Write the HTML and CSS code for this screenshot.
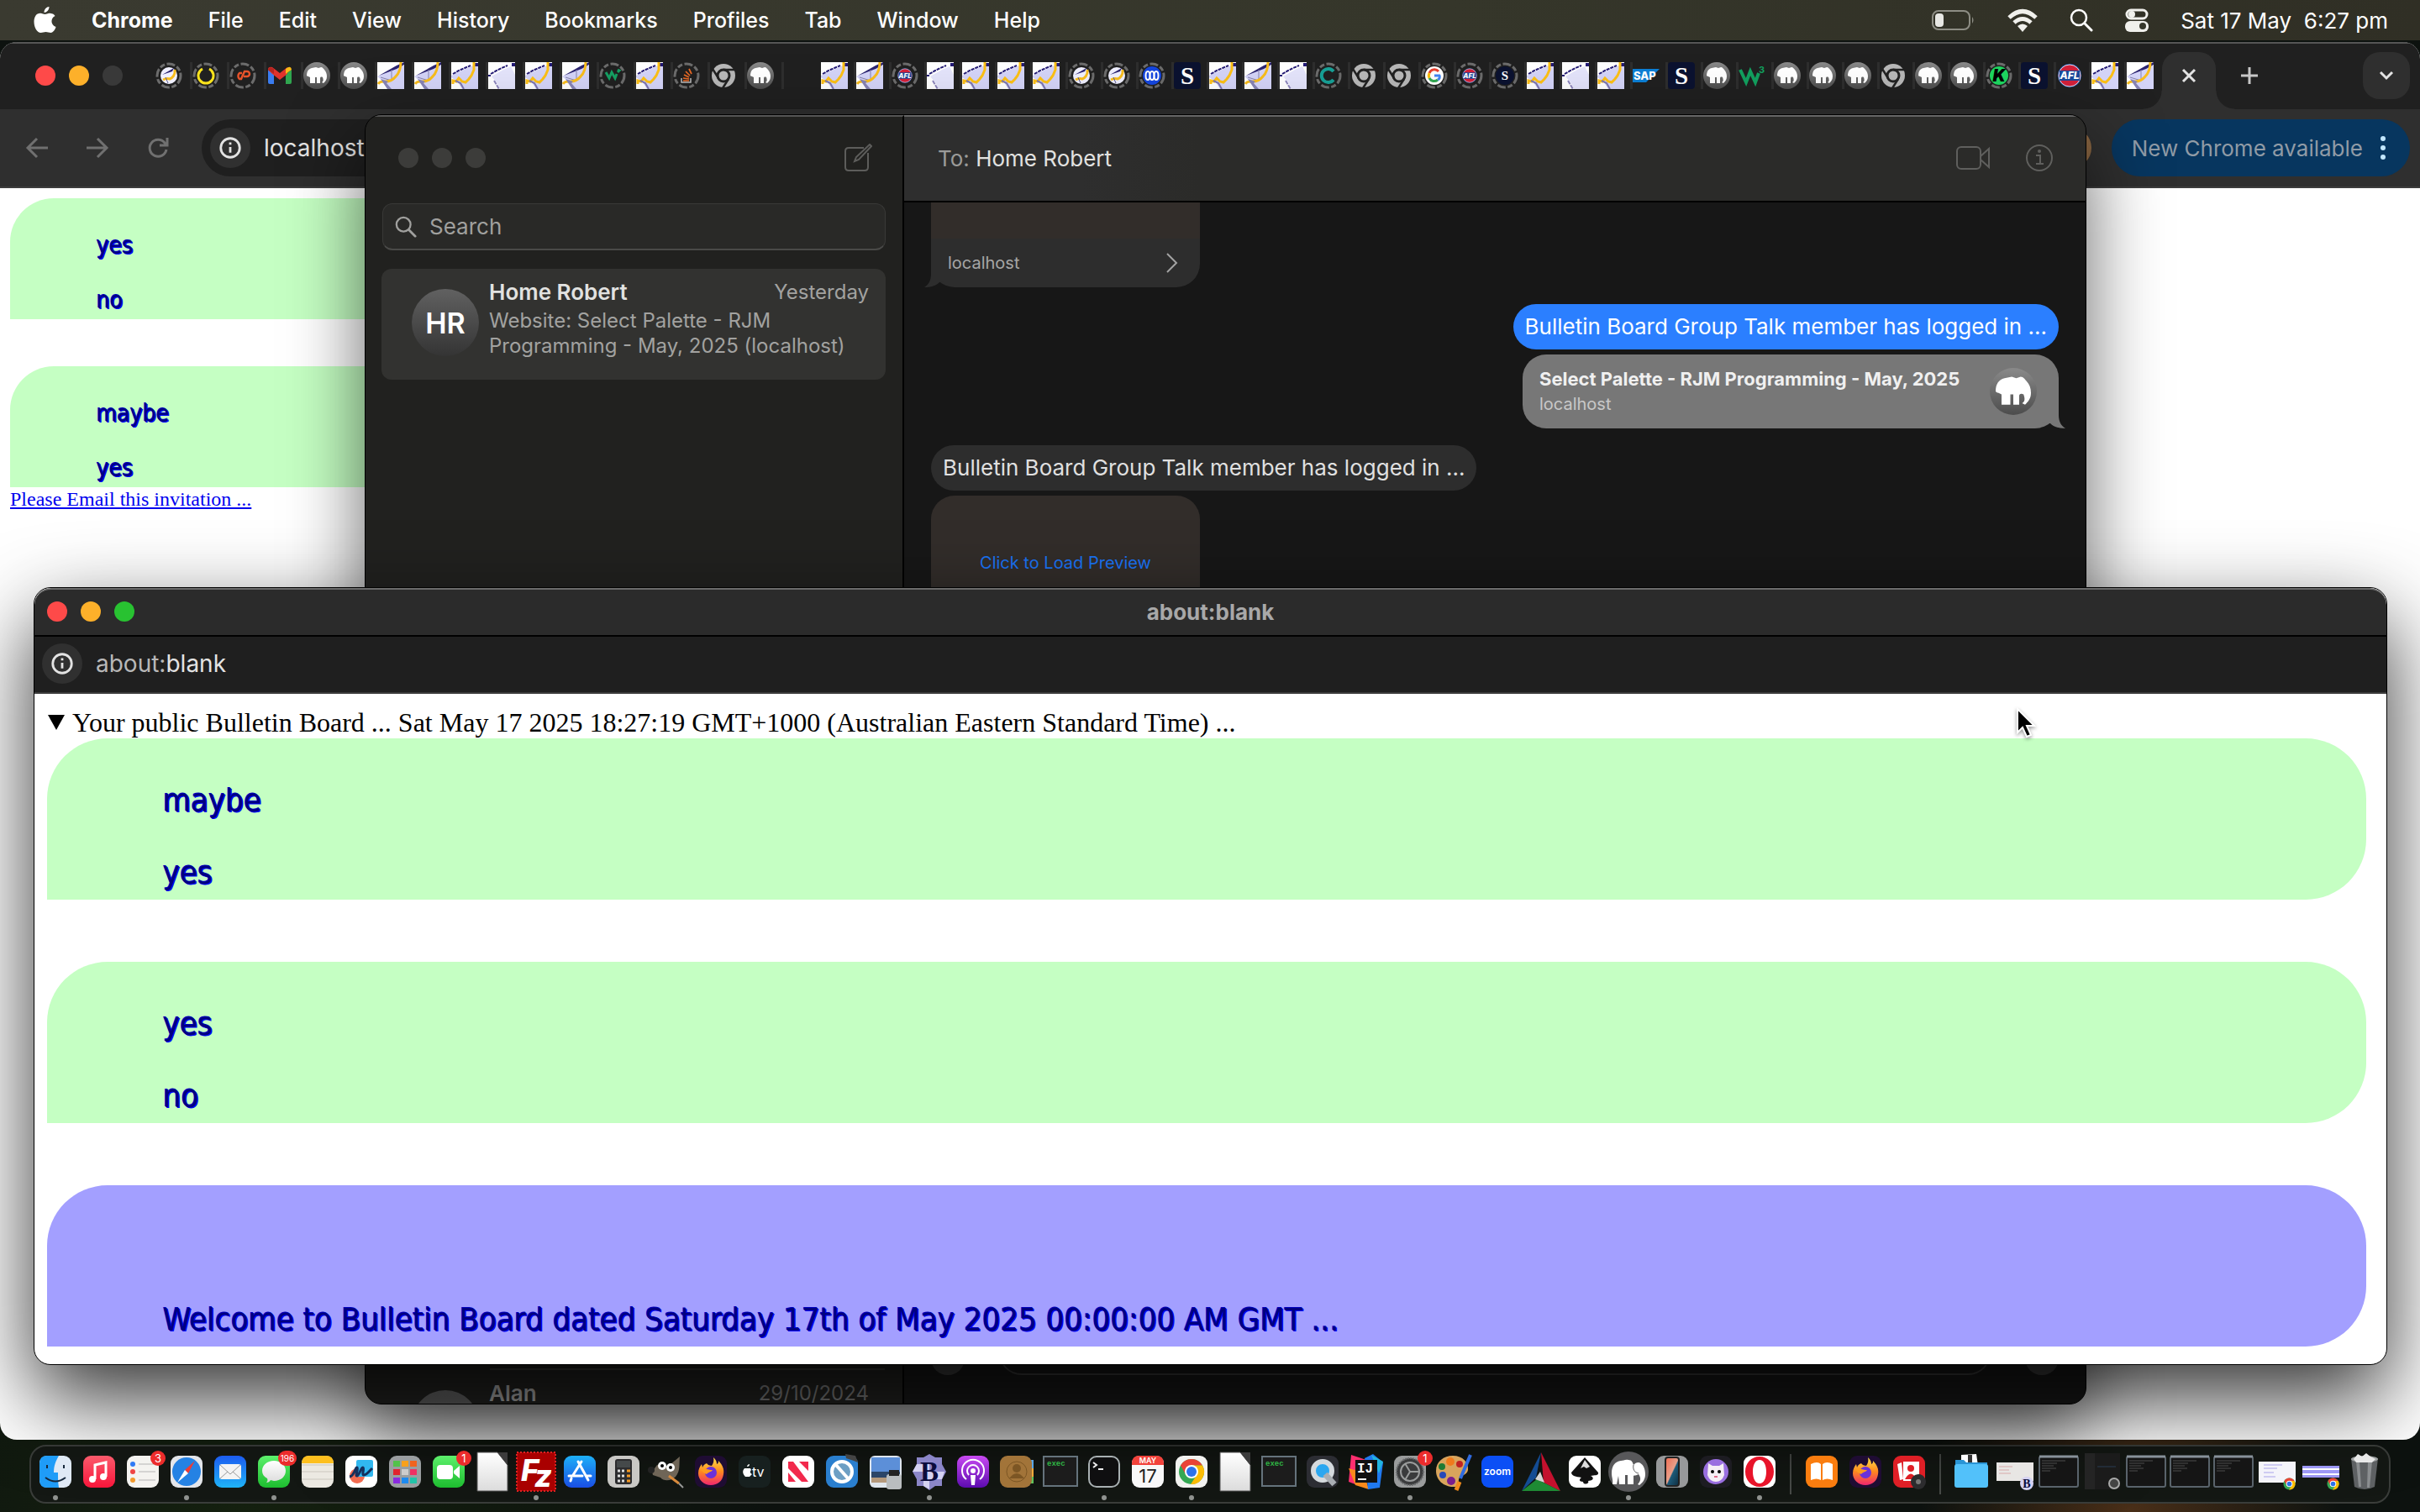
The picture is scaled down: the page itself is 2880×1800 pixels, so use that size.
FILE: index.html
```html
<!DOCTYPE html>
<html lang="en">
<head>
  <meta charset="UTF-8" />
  <meta name="viewport" content="width=device-width, initial-scale=1" />
  <title>Bulletin Board</title>
  <link rel="stylesheet" href="styles.css">
</head>
<body>

  <!-- shared icons -->
  <svg class="defs" aria-hidden="true">
    <defs>
      <linearGradient id="g-grey" x1="0" y1="0" x2="0" y2="1"><stop offset="0" stop-color="#8a8a8a"/><stop offset="1" stop-color="#4c4c4c"/></linearGradient>
      <linearGradient id="g-blue" x1="0" y1="0" x2="0" y2="1"><stop offset="0" stop-color="#1c5cf0"/><stop offset="1" stop-color="#1fb4f8"/></linearGradient>
      <linearGradient id="g-store" x1="0" y1="0" x2="0" y2="1"><stop offset="0" stop-color="#1db0f8"/><stop offset="1" stop-color="#1a4ee4"/></linearGradient>
      <linearGradient id="g-red" x1="0" y1="0" x2="0" y2="1"><stop offset="0" stop-color="#fb5a6c"/><stop offset="1" stop-color="#f8153a"/></linearGradient>
      <linearGradient id="g-green" x1="0" y1="0" x2="0" y2="1"><stop offset="0" stop-color="#5df06c"/><stop offset="1" stop-color="#1dbd2f"/></linearGradient>
      <linearGradient id="g-purple" x1="0" y1="0" x2="0" y2="1"><stop offset="0" stop-color="#c94af2"/><stop offset="1" stop-color="#5c0bb0"/></linearGradient>
      <linearGradient id="g-white" x1="0" y1="0" x2="0" y2="1"><stop offset="0" stop-color="#ffffff"/><stop offset="1" stop-color="#dcdcdc"/></linearGradient>
      <linearGradient id="g-fire" x1="0" y1="0" x2="0" y2="1"><stop offset="0" stop-color="#ffe14a"/><stop offset=".5" stop-color="#ff8a1e"/><stop offset="1" stop-color="#f0266f"/></linearGradient>
      <linearGradient id="g-phone" x1="0" y1="0" x2="1" y2="1"><stop offset="0" stop-color="#f06a50"/><stop offset=".5" stop-color="#e8a08a"/><stop offset=".55" stop-color="#1d5a78"/><stop offset="1" stop-color="#0e2c3e"/></linearGradient>
    </defs>

    <symbol id="elephant" viewBox="0 0 32 32">
      <circle cx="16" cy="16" r="16" fill="url(#g-grey)"/>
      <path fill="#fff" d="M4 16c0-5 2-8 6-9l5-1 3 1 3-1c2 0 3 2 4 3 2 2 3 5 3 8 0 4-2 6-4 8l-2-1c2-1 2-3 1-6-2-1-3 0-3 1v6h-4v-7h-2v7H8v-7l-2-1c-1 0-2-1-2-1z"/>
    </symbol>
    <symbol id="sail" viewBox="0 0 32 32">
      <path fill="#fff" d="M0 0h32v32H0z"/>
      <path fill="#d4d4f8" d="M0 16l8-4 18-8 6-2v30H13L8 24l-8-6z"/>
      <path fill="none" stroke="#231a75" stroke-width="2" stroke-dasharray="4 1" d="M2 14l7-4 7-3 7-3"/>
      <path fill="#231a75" d="M28 1h4v4h-4z"/>
      <path fill="none" stroke="#fcc016" stroke-width="3" d="M27 0v9l-3 7-3 4-4 4-4-1-4-4-3 4-4-1v4"/>
      <path fill="none" stroke="#7d76b0" stroke-width="2" d="M5 22l6 3 4 7"/>
    </symbol>
    <symbol id="sail2" viewBox="0 0 32 32">
      <path fill="#fff" d="M0 0h32v32H0z"/>
      <path fill="#d4d4f8" d="M0 17L27 4h5v28H14L6 22z"/>
      <path fill="#2b2370" d="M2 16L23 4l9-4v3l-9 5z"/>
      <path fill="none" stroke="#8683ae" stroke-width="1" d="M17 9v13L4 18"/>
      <path fill="none" stroke="#f8bd1c" stroke-width="3" d="M28 0c0 8-2 13-6 17-4 5-8 6-12 6-5 0-7 0-9 3"/>
      <path fill="#8784b4" d="M4 20l9 3-2 2 6 7h-5z"/>
    </symbol>
    <symbol id="sail3" viewBox="0 0 32 32">
      <path fill="#fff" d="M0 0h32v32H0z"/>
      <path fill="#e4e4fb" d="M4 17l14-8 9-4 5 10v17H14l-4-8z"/>
      <path fill="none" stroke="#231a75" stroke-width="2" stroke-dasharray="4 1" d="M3 14l7-4 6-3 7-3"/>
      <path fill="#231a75" d="M28 1h4v4h-4zM0 15h3v2H0z"/>
      <path fill="none" stroke="#8c85bd" stroke-width="2" stroke-dasharray="5 1" d="M7 22l6 10"/>
    </symbol>
    <symbol id="ring" viewBox="0 0 32 32">
      <circle cx="16" cy="16" r="14" fill="none" stroke="#6c6c6c" stroke-width="3" stroke-dasharray="10 2.500 6 2.500"/>
    </symbol>
    <symbol id="ring-sail" viewBox="0 0 32 32">
      <use href="#ring"/><circle cx="16" cy="16" r="10" fill="#f0f0ff"/>
      <path fill="#2b2370" d="M8 15l14-8-2 4z"/><path fill="none" stroke="#f8bd1c" stroke-width="3" d="M23 9c1 6-3 10-6 11-3-1-6 0-8 1"/><path stroke="#5d5a8c" d="M12 18l3 7"/>
    </symbol>
    <symbol id="ring-y" viewBox="0 0 32 32"><use href="#ring"/><path fill="none" stroke="#fbe31c" stroke-width="3" d="M12 8a9 9 0 1 0 8 0"/></symbol>
    <symbol id="ring-cp" viewBox="0 0 32 32"><use href="#ring"/><path fill="none" stroke="#e8532a" stroke-width="2.500" d="M15 13h-3a3 4 0 0 0 0 7h2l4-9h3a3 3 0 0 1 0 6h-4"/></symbol>
    <symbol id="gmail" viewBox="0 0 32 32">
      <path fill="#3a7cf0" d="M2 9l7 5v12H4q-2 0-2-2z"/><path fill="#2fa64f" d="M30 9l-7 5v12h5q2 0 2-2z"/>
      <path fill="#e0322c" d="M2 9q0-4 5-3l9 7 9-7v8l-9 7-9-7z"/><path fill="#f8ba16" d="M23 8q6-5 7 1l-7 5z"/><path fill="#b52420" d="M2 9q1-5 7-1v6z"/>
    </symbol>
    <symbol id="ring-w" viewBox="0 0 32 32"><use href="#ring"/><path fill="none" stroke="#15a063" stroke-width="3" d="M8 12l4 7 3-7 4 7 2-5M22 9l2 1-2 2"/></symbol>
    <symbol id="w3" viewBox="0 0 32 32"><path fill="none" stroke="#12a05f" stroke-width="4" d="M2 9l7 15 5-13 6 13 4-11"/></symbol>
    <symbol id="ring-so" viewBox="0 0 32 32"><use href="#ring"/><path fill="none" stroke="#bbb" stroke-width="1.500" d="M10 19v5h11v-5"/><path fill="none" stroke="#ec6a24" stroke-width="1.700" d="M12 22h7M12 19l7 1M13 15l6 3M15 11l5 5M19 8l3 6"/></symbol>
    <symbol id="chrome-grey" viewBox="0 0 32 32">
      <circle cx="16" cy="16" r="14" fill="#b8b8b8"/><circle cx="16" cy="16" r="7" fill="#b8b8b8" stroke="#222" stroke-width="3"/>
      <path stroke="#222" stroke-width="2.500" d="M16 9h13M10 19L3 8M22 20l-7 11"/>
    </symbol>
    <symbol id="afl" viewBox="0 0 32 32"><circle cx="16" cy="16" r="14" fill="#1b4a9c"/><circle cx="16" cy="16" r="13" fill="#d3203a" stroke="#dcdcf0"/><path fill="#1b4a9c" d="M4 10h24v12H4z"/></symbol>
    <symbol id="ring-abc" viewBox="0 0 32 32"><use href="#ring"/><circle cx="16" cy="16" r="11" fill="#1546e0"/><g fill="none" stroke="#fff" stroke-width="2"><ellipse cx="11" cy="16" rx="2.500" ry="5"/><ellipse cx="16" cy="16" rx="2.500" ry="5"/><ellipse cx="21" cy="16" rx="2.500" ry="5"/></g></symbol>
    <symbol id="smh" viewBox="0 0 32 32"><rect width="32" height="32" rx="4" fill="#0b1230"/></symbol>
    <symbol id="ring-smh" viewBox="0 0 32 32"><use href="#ring"/><circle cx="16" cy="16" r="11" fill="#0b1230"/></symbol>
    <symbol id="ring-c" viewBox="0 0 32 32"><use href="#ring"/><path fill="none" stroke="#17a096" stroke-width="4" d="M22 11a8 8 0 1 0 0 10"/></symbol>
    <symbol id="ring-g" viewBox="0 0 32 32"><use href="#ring"/><circle cx="16" cy="16" r="11" fill="#fff"/><g fill="none" stroke-width="3"><path stroke="#e8402f" d="M10 13a6.500 6.500 0 0 1 11-2"/><path stroke="#fbbc05" d="M10 13a7 7 0 0 0 0 6"/><path stroke="#34a853" d="M10 19a6.500 6.500 0 0 0 10 2"/><path stroke="#4285f4" d="M20 21c2-1 3-3 2-5h-6"/></g></symbol>
    <symbol id="sap" viewBox="0 0 32 32"><path fill="#0c7fd6" d="M0 8h32L16 24H0z"/></symbol>
    <symbol id="ring-k" viewBox="0 0 32 32"><use href="#ring"/><circle cx="16" cy="16" r="11" fill="#1ed760"/></symbol>
    <symbol id="info" viewBox="0 0 32 32"><circle cx="16" cy="16" r="12" fill="none" stroke="currentColor" stroke-width="3"/><path stroke="currentColor" stroke-width="3" d="M16 15v7M16 9v3"/></symbol>
    <symbol id="lens" viewBox="0 0 28 28"><circle cx="11" cy="11" r="9" fill="none" stroke="currentColor" stroke-width="2.500"/><path stroke="currentColor" stroke-width="3" stroke-linecap="round" d="M18 18l8 8"/></symbol>

    <symbol id="chrome" viewBox="0 0 32 32">
      <circle cx="16" cy="16" r="15" fill="#34a853"/><path fill="#ea4335" d="M3 8.500A15 15 0 0 1 29 8.500H16L9.500 20z"/><path fill="#fbbc05" d="M29 8.500A15 15 0 0 1 15 31l7.500-11.500L16 8.500z"/>
      <circle cx="16" cy="16" r="8" fill="#fff"/><circle cx="16" cy="16" r="6" fill="#2c72ea"/>
    </symbol>
    <symbol id="firefox" viewBox="0 0 48 48">
      <rect x="5" y="5" width="38" height="38" rx="9" fill="#1f0c33"/>
      <path fill="url(#g-fire)" d="M27 7c3 3 4 5 4 8 2-1 2-2 2-4 5 5 7 10 6 16-1 8-7 13-15 13S9 34 9 26c0-5 2-8 4-11l1 4c1-3 3-4 5-5 1 2 4 3 6 3 2-3 3-6 2-10z"/>
      <circle cx="24" cy="25" r="7" fill="#6b32d8"/><path fill="#ff9a1f" d="M12 22c6-3 9 0 14 0-2 3-5 2-7 5-3-1-5-3-7-5z"/>
    </symbol>
    <symbol id="doc" viewBox="0 0 48 48"><path fill="url(#g-white)" stroke="#555" d="M6 1h24l12 15v31H6z"/><path fill="#3c3c3c" d="M30 1h12v15z"/></symbol>
    <symbol id="exec" viewBox="0 0 48 48"><rect x="4" y="6" width="40" height="35" fill="#1c1c1c" stroke="#65737c" stroke-width="2"/></symbol>
    <symbol id="term-thumb" viewBox="0 0 48 48"><rect x="1" y="6" width="46" height="36" rx="2" fill="#151515" stroke="#59636b" stroke-width="2"/><path stroke="#87919a" stroke-width="3" d="M1 6h46"/><path stroke="#4c4c4c" d="M4 11h28M4 14h18M4 17h14M4 20h17M4 23h10"/></symbol>
  </svg>

  <!-- menu bar -->
  <header class="menubar">
    <nav class="menus">
      <svg class="apple" viewBox="0 0 26 32"><path fill="#fff" d="M18 0c0 4-3 7-6 7 0-4 3-7 6-7zM6 8c3-1 5 1 7 1s4-2 7-1c2 0 4 1 5 3-6 3-5 11 1 13-1 4-4 7-6 7s-4-1-6-1-4 1-6 1C4 31 0 25 0 18c0-6 3-10 6-10z"/></svg>
      <a href="#" class="app">Chrome</a>
      <a href="#">File</a>
      <a href="#">Edit</a>
      <a href="#">View</a>
      <a href="#">History</a>
      <a href="#">Bookmarks</a>
      <a href="#">Profiles</a>
      <a href="#">Tab</a>
      <a href="#">Window</a>
      <a href="#">Help</a>
    </nav>
    <div class="status">
      <svg width="52" height="28" viewBox="0 0 52 28"><rect x="1" y="3" width="44" height="22" rx="7" fill="none" stroke="#8d8d84" stroke-width="2"/><rect x="4" y="6" width="10" height="16" rx="4" fill="#e8e8e4"/><path fill="#8d8d84" d="M48 10q3 4 0 8z"/></svg>
      <svg width="36" height="28" viewBox="0 0 36 28"><g fill="none" stroke="#f0f0ec" stroke-width="5"><path d="M2 11q16-15 32 0"/><path d="M8 17q10-9 20 0"/></g><path fill="#f0f0ec" d="M12 21q6-5 12 0l-6 7z"/></svg>
      <svg class="lens" width="28" height="28"><use href="#lens"/></svg>
      <svg width="28" height="28" viewBox="0 0 28 28"><rect x="2" y="2" width="24" height="10" rx="5" fill="none" stroke="#f0f0ec" stroke-width="3"/><circle cx="8" cy="7" r="4" fill="#f0f0ec"/><rect x="0" y="15" width="28" height="13" rx="6" fill="#f0f0ec"/><circle cx="21" cy="21" r="4" fill="#36372b"/></svg>
      <span class="clock">Sat 17 May&nbsp; 6:27 pm</span>
    </div>
  </header>

  <!-- Chrome window at the back -->
  <main class="browser">
    <div class="tabstrip">
      <div class="lights"><i class="red"></i><i class="amber"></i><i class="off"></i></div>
      <div class="tabs pinned">
        <button class="tab"><svg><use href="#ring-sail"/></svg></button>
        <button class="tab"><svg><use href="#ring-y"/></svg></button>
        <button class="tab"><svg><use href="#ring-cp"/></svg></button>
        <button class="tab"><svg><use href="#gmail"/></svg></button>
        <button class="tab"><svg><use href="#elephant"/></svg></button>
        <button class="tab"><svg><use href="#elephant"/></svg></button>
        <button class="tab"><svg><use href="#sail2"/></svg></button>
        <button class="tab"><svg><use href="#sail2"/></svg></button>
        <button class="tab"><svg><use href="#sail"/></svg></button>
        <button class="tab"><svg><use href="#sail3"/></svg></button>
        <button class="tab"><svg><use href="#sail"/></svg></button>
        <button class="tab"><svg><use href="#sail2"/></svg></button>
        <button class="tab"><svg><use href="#ring-w"/></svg></button>
        <button class="tab"><svg><use href="#sail"/></svg></button>
        <button class="tab"><svg><use href="#ring-so"/></svg></button>
        <button class="tab"><svg><use href="#chrome-grey"/></svg></button>
        <button class="tab"><svg><use href="#elephant"/></svg></button>
      </div>
      <div class="tabs">
        <button class="tab"><svg><use href="#sail"/></svg></button>
        <button class="tab"><svg><use href="#sail2"/></svg></button>
        <button class="tab"><svg viewBox="0 0 32 32"><use href="#ring"/><use href="#afl" x="6" y="6" width="20" height="20"/><text x="16" y="19" class="t-afl small" text-anchor="middle">AFL</text></svg></button>
        <button class="tab"><svg><use href="#sail3"/></svg></button>
        <button class="tab"><svg><use href="#sail"/></svg></button>
        <button class="tab"><svg><use href="#sail"/></svg></button>
        <button class="tab"><svg><use href="#sail"/></svg></button>
        <button class="tab"><svg><use href="#ring-sail"/></svg></button>
        <button class="tab"><svg><use href="#ring-sail"/></svg></button>
        <button class="tab"><svg><use href="#ring-abc"/></svg></button>
        <button class="tab"><svg viewBox="0 0 32 32"><use href="#smh"/><text x="16" y="26" class="t-s" text-anchor="middle">S</text></svg></button>
        <button class="tab"><svg><use href="#sail"/></svg></button>
        <button class="tab"><svg><use href="#sail2"/></svg></button>
        <button class="tab"><svg><use href="#sail3"/></svg></button>
        <button class="tab"><svg><use href="#ring-c"/></svg></button>
        <button class="tab"><svg><use href="#chrome-grey"/></svg></button>
        <button class="tab"><svg><use href="#chrome-grey"/></svg></button>
        <button class="tab"><svg><use href="#ring-g"/></svg></button>
        <button class="tab"><svg viewBox="0 0 32 32"><use href="#ring"/><use href="#afl" x="6" y="6" width="20" height="20"/><text x="16" y="19" class="t-afl small" text-anchor="middle">AFL</text></svg></button>
        <button class="tab"><svg viewBox="0 0 32 32"><use href="#ring-smh"/><text x="16" y="21" class="t-s small" text-anchor="middle">S</text></svg></button>
        <button class="tab"><svg><use href="#sail"/></svg></button>
        <button class="tab"><svg><use href="#sail3"/></svg></button>
        <button class="tab"><svg><use href="#sail"/></svg></button>
        <button class="tab"><svg viewBox="0 0 32 32"><use href="#sap"/><text x="1" y="21" class="t-sap">SAP</text></svg></button>
        <button class="tab"><svg viewBox="0 0 32 32"><use href="#smh"/><text x="16" y="26" class="t-s" text-anchor="middle">S</text></svg></button>
        <button class="tab"><svg><use href="#elephant"/></svg></button>
        <button class="tab"><svg viewBox="0 0 32 32"><use href="#w3"/><text x="24" y="13" class="t-sm">3</text></svg></button>
        <button class="tab"><svg><use href="#elephant"/></svg></button>
        <button class="tab"><svg><use href="#elephant"/></svg></button>
        <button class="tab"><svg><use href="#elephant"/></svg></button>
        <button class="tab"><svg><use href="#chrome-grey"/></svg></button>
        <button class="tab"><svg><use href="#elephant"/></svg></button>
        <button class="tab"><svg><use href="#elephant"/></svg></button>
        <button class="tab"><svg viewBox="0 0 32 32"><use href="#ring-k"/><text x="16" y="23" class="t-k" text-anchor="middle">K</text></svg></button>
        <button class="tab"><svg viewBox="0 0 32 32"><use href="#smh"/><text x="16" y="26" class="t-s" text-anchor="middle">S</text></svg></button>
        <button class="tab"><svg viewBox="0 0 32 32"><use href="#afl"/><text x="16" y="20" class="t-afl" text-anchor="middle">AFL</text></svg></button>
        <button class="tab"><svg><use href="#sail"/></svg></button>
        <button class="tab last"><svg><use href="#sail2"/></svg></button>
      </div>
      <button class="tab-active" aria-label="Close tab"><svg width="20" height="20" viewBox="0 0 20 20"><path stroke="#e3e3e3" stroke-width="3" d="M3 3l14 14M17 3L3 17"/></svg></button>
      <button class="tab-new" aria-label="New tab"><svg width="24" height="24" viewBox="0 0 24 24"><path stroke="#c7c7c7" stroke-width="3" d="M12 2v20M2 12h20"/></svg></button>
      <button class="tab-search" aria-label="Search tabs"><svg width="20" height="20" viewBox="0 0 20 20"><path fill="none" stroke="#e3e3e3" stroke-width="3" d="M3 6l7 7 7-7"/></svg></button>
    </div>

    <div class="toolbar">
      <button class="tool" aria-label="Back"><svg viewBox="0 0 28 28"><path d="M27 14H3M14 3L3 14l11 11"/></svg></button>
      <button class="tool" aria-label="Forward"><svg viewBox="0 0 28 28"><path d="M1 14h24M14 3l11 11-11 11"/></svg></button>
      <button class="tool" aria-label="Reload"><svg viewBox="0 0 28 28"><path d="M24 16a10 10 0 1 1-2-8l3 3M25 2v9h-9"/></svg></button>
      <div class="omnibox"><span class="chip"><svg><use href="#info"/></svg></span><span>localhost</span></div>
      <span class="profile"></span>
      <button class="update">New Chrome available <svg width="8" height="28" viewBox="0 0 8 28"><g fill="#c2e7ff"><circle cx="4" cy="3" r="3"/><circle cx="4" cy="14" r="3"/><circle cx="4" cy="25" r="3"/></g></svg></button>
    </div>

    <div class="page">
      <div class="note small"><p>yes</p><p>no</p></div>
      <div class="note small"><p>maybe</p><p>yes</p></div>
      <a class="invite" href="#">Please Email this invitation ...</a>
    </div>
  </main>

  <!-- Messages window -->
  <section class="messages">
    <aside class="sidebar">
      <div class="side-top">
        <div class="lights"><i class="idle"></i><i class="idle"></i><i class="idle"></i></div>
        <svg width="34" height="34" viewBox="0 0 34 34"><path fill="none" stroke="#5d5d5b" stroke-width="2" d="M24 5H6q-4 0-4 4v19q0 4 4 4h19q4 0 4-4V11M13 21l2-5L31 1l2 2-15 16z"/></svg>
      </div>
      <label class="search"><svg><use href="#lens"/></svg><input type="text" placeholder="Search" /></label>
      <div class="chat selected">
        <div class="avatar">HR</div>
        <div class="chat-text">
          <div class="chat-head"><b>Home Robert</b><span>Yesterday</span></div>
          <p>Website: Select Palette - RJM Programming - May, 2025 (localhost)</p>
        </div>
      </div>
      <hr>
      <div class="chat cut">
        <div class="avatar"></div>
        <div class="chat-text">
          <div class="chat-head"><b>Alan</b><span>29/10/2024</span></div>
        </div>
      </div>
    </aside>
    <div class="talk">
      <div class="talk-top">
        <div><span>To:</span> Home Robert</div>
        <div class="talk-tools">
          <svg width="42" height="30" viewBox="0 0 42 30"><g fill="none" stroke="#5f5f5d" stroke-width="2"><rect x="1" y="2" width="28" height="26" rx="5"/><path d="M29 13l10-9v22l-10-9"/></g></svg>
          <svg width="34" height="34" viewBox="0 0 34 34"><g fill="none" stroke="#5f5f5d" stroke-width="2"><circle cx="17" cy="17" r="15"/><path d="M13 14h5v10M13 24h9"/></g><circle cx="17" cy="9" r="2" fill="#5f5f5d"/></svg>
        </div>
      </div>
      <div class="talk-body">
        <div class="preview tail-left">
          <div class="preview-image"></div>
          <div class="preview-foot"><span>localhost</span><svg width="14" height="24" viewBox="0 0 14 24"><path fill="none" stroke="#a2a2a2" stroke-width="2" d="M1 1l11 11L1 23"/></svg></div>
        </div>
        <div class="bubble mine">Bulletin Board Group Talk member has logged in ...</div>
        <div class="link-card">
          <div><b>Select Palette - RJM Programming - May, 2025</b><span>localhost</span></div>
          <svg><use href="#elephant"/></svg>
        </div>
        <div class="bubble theirs">Bulletin Board Group Talk member has logged in ...</div>
        <div class="preview open"><button>Click to Load Preview</button></div>
      </div>
      <div class="compose"><i></i><span></span><i></i></div>
    </div>
  </section>

  <!-- popup window -->
  <section class="popup">
    <div class="popup-title">
      <div class="lights"><i class="red"></i><i class="amber"></i><i class="green"></i></div>
      <h1>about:blank</h1>
    </div>
    <div class="popup-url"><span class="chip"><svg><use href="#info"/></svg></span><span><em>about:</em>blank</span></div>
    <details class="board" open>
      <summary>Your public Bulletin Board ... Sat May 17 2025 18:27:19 GMT+1000 (Australian Eastern Standard Time) ...</summary>
      <div class="note"><p>maybe</p><p>yes</p></div>
      <div class="note"><p>yes</p><p>no</p></div>
      <div class="note welcome"><p>Welcome to Bulletin Board dated Saturday 17th of May 2025 00:00:00 AM GMT ...</p></div>
    </details>
    <svg class="cursor" width="28" height="38" viewBox="0 0 28 38"><path fill="#000" stroke="#fff" stroke-width="2" d="M3 2v28l6-6 5 11 5-2-5-11h9z"/></svg>
  </section>

  <!-- dock -->
  <footer class="dock">
    <a href="#" class="on"><svg viewBox="0 0 48 48"><rect x="5" y="5" width="38" height="38" rx="9" fill="#dfe9f5"/><path fill="#1f9cf8" d="M14 5h14c-4 7-6 12-6 20h5c0 7 0 12 1 18H14q-9 0-9-9V14q0-9 9-9z"/><path stroke="#16283c" stroke-width="2" fill="none" d="M14 16v4M34 16v4M12 31q12 9 24 0"/></svg></a>
    <a href="#"><svg viewBox="0 0 48 48"><rect x="5" y="5" width="38" height="38" rx="9" fill="url(#g-red)"/><path fill="none" stroke="#fff" stroke-width="3" d="M19 33V16l13-3v17"/><circle cx="16" cy="33" r="4" fill="#fff"/><circle cx="29" cy="30" r="4" fill="#fff"/></svg></a>
    <a href="#"><svg viewBox="0 0 48 48"><rect x="5" y="5" width="38" height="38" rx="9" fill="#f4f3f0"/><circle cx="12" cy="15" r="3" fill="#2f7af5"/><circle cx="12" cy="24" r="3" fill="#ef4444"/><circle cx="12" cy="34" r="3" fill="#f29a2e"/><path stroke="#b5b5b5" d="M19 15h20M19 24h20M19 34h20"/></svg><span class="badge">3</span></a>
    <a href="#" class="on"><svg viewBox="0 0 48 48"><rect x="5" y="5" width="38" height="38" rx="9" fill="#e4e6ea"/><circle cx="24" cy="24" r="17" fill="#2482e4"/><path fill="#f03b34" d="M34 11l-8 15-4-4z"/><path fill="#fff" d="M13 37l9-15 4 4z"/></svg></a>
    <a href="#"><svg viewBox="0 0 48 48"><rect x="5" y="5" width="38" height="38" rx="9" fill="url(#g-blue)"/><rect x="11" y="15" width="26" height="18" rx="3" fill="#f4f4f4"/><path fill="none" stroke="#9a9a9a" d="M12 16l12 11 12-11M12 32l9-8M36 32l-9-8"/></svg></a>
    <a href="#" class="on"><svg viewBox="0 0 48 48"><rect x="5" y="5" width="38" height="38" rx="9" fill="url(#g-green)"/><path fill="url(#g-white)" d="M24 11c8 0 14 5 14 12s-6 12-14 12l-4-1c-1 2-3 3-5 3 1-1 2-3 1-5-4-2-6-5-6-9 0-7 6-12 14-12z"/></svg><span class="badge wide">196</span></a>
    <a href="#"><svg viewBox="0 0 48 48"><rect x="5" y="5" width="38" height="38" rx="9" fill="#ece9e2"/><path fill="#fdbf1e" d="M5 14q0-9 9-9h20q9 0 9 9z"/><path stroke="#cbc7be" d="M5 16h38M5 24h38M5 33h38"/></svg></a>
    <a href="#"><svg viewBox="0 0 48 48"><rect x="5" y="5" width="38" height="38" rx="9" fill="#fff"/><circle cx="19" cy="29" r="9" fill="#f26b50"/><rect x="18" y="10" width="20" height="20" rx="2" fill="#31b8f0"/><path fill="none" stroke="#16305c" stroke-width="3" d="M10 30c6-1 7-12 9-11s-3 11 0 10 5-11 7-10-2 9 1 9 4-2 10-8"/></svg></a>
    <a href="#"><svg viewBox="0 0 48 48"><rect x="5" y="5" width="38" height="38" rx="9" fill="#9a9ea0"/><g><path fill="#52c24a" d="M10 11h8v7h-8z"/><path fill="#f8a11c" d="M20 11h8v7h-8z"/><path fill="#f0631f" d="M30 11h8v7h-8z"/><path fill="#e0232f" d="M10 21h8v7h-8z"/><path fill="#ccc" d="M20 21h8v7h-8z"/><path fill="#f03063" d="M30 21h8v7h-8z"/><path fill="#8a2ae0" d="M10 31h8v7h-8z"/><path fill="#1c8af0" d="M20 31h8v7h-8z"/><path fill="#22c3a8" d="M30 31h8v7h-8z"/></g></svg></a>
    <a href="#"><svg viewBox="0 0 48 48"><rect x="5" y="5" width="38" height="38" rx="9" fill="url(#g-green)"/><rect x="10" y="16" width="19" height="17" rx="4" fill="#fff"/><path fill="#fff" d="M30 23l7-6v15l-7-6z"/></svg><span class="badge">1</span></a>
    <a href="#"><svg><use href="#doc"/></svg></a>
    <a href="#" class="on"><svg viewBox="0 0 48 48"><rect x="1" y="1" width="46" height="46" fill="#a90000" stroke="#d22" stroke-width="2" stroke-dasharray="2 2"/><text x="6" y="35" class="t-fz">F</text><text x="22" y="42" class="t-fz">z</text></svg></a>
    <a href="#"><svg viewBox="0 0 48 48"><rect x="5" y="5" width="38" height="38" rx="9" fill="url(#g-store)"/><path fill="none" stroke="#fff" stroke-width="3" stroke-linecap="round" d="M22 12l12 22M26 12L16 28M11 29h16M32 29h5M14 32l-1 3"/></svg></a>
    <a href="#"><svg viewBox="0 0 48 48"><rect x="5" y="5" width="38" height="38" rx="9" fill="#c9c8c5"/><rect x="14" y="9" width="20" height="30" rx="3" fill="#2c2c2e"/><rect x="16" y="11" width="16" height="8" fill="#45494a"/><path stroke="#ddd" stroke-width="3" stroke-dasharray="3 2" d="M17 23h9M17 29h9M17 35h9"/><path stroke="#f59a23" stroke-width="3" d="M28 23h4M28 29h4M28 35h4"/></svg></a>
    <a href="#"><svg viewBox="0 0 48 48"><path fill="#6f6557" d="M6 24l6-8 9 2 6-2L39 6c-1 9 1 17-5 24-5 5-14 6-18 1L7 28z"/><circle cx="5" cy="22" r="4" fill="#222"/><circle cx="18" cy="17" r="5" fill="#fff"/><circle cx="28" cy="19" r="5" fill="#fff"/><circle cx="18" cy="17" r="2"/><circle cx="28" cy="19" r="2"/><path stroke="#d98a3c" stroke-width="3" d="M26 29l12 9"/><path stroke="#999" stroke-width="2" d="M38 38l5 5"/></svg></a>
    <a href="#"><svg><use href="#firefox"/></svg></a>
    <a href="#"><svg viewBox="0 0 48 48"><rect x="5" y="5" width="38" height="38" rx="9" fill="#17201f"/><path fill="#fff" d="M15 18c0-2 2-3 3-3 0 2-1 3-3 3zM12 20h7l1 2c-2 2-1 4 1 5l-3 3h-5c-3-3-4-7-1-10z"/><text x="21" y="30" class="t-tv">tv</text></svg></a>
    <a href="#"><svg viewBox="0 0 48 48"><rect x="5" y="5" width="38" height="38" rx="9" fill="#fff"/><path fill="#f2294c" d="M12 12h6l18 24h-8L12 20zM12 25l9 11h-9zM25 12h11v11z"/></svg></a>
    <a href="#"><svg viewBox="0 0 48 48"><rect x="5" y="5" width="38" height="38" rx="9" fill="#2a7fcf"/><path fill="#444" d="M28 3l12 2 3 8-5-2-9-3z"/><circle cx="24" cy="24" r="12" fill="#6d9fc4" stroke="#fff" stroke-width="4"/><path stroke="#fff" stroke-width="4" d="M16 15l16 18"/></svg></a>
    <a href="#"><svg viewBox="0 0 48 48"><rect x="5" y="5" width="38" height="38" rx="6" fill="#dfe6ee"/><path fill="#5c8fd8" d="M7 7h34v17H7z"/><path fill="#2c4668" d="M7 24h34v7H7z"/><path fill="#b59a7d" d="M7 31h34v6H7z"/><rect x="25" y="27" width="18" height="18" rx="3" fill="#b9bdbf"/><rect x="28" y="22" width="12" height="7" fill="#222"/></svg></a>
    <a href="#" class="on"><svg viewBox="0 0 48 48"><path fill="#8b86c8" d="M24 3l7 4h8v8l5 9-5 9v8h-8l-7 5-7-5H9v-8l-5-9 5-9V7h8z"/><path fill="#d5d2f2" d="M24 3v42l-7-4V24H4l5-9h15zM24 24h18l-3 9H24z"/><text x="24" y="35" class="t-b" text-anchor="middle">B</text></svg></a>
    <a href="#"><svg viewBox="0 0 48 48"><rect x="5" y="5" width="38" height="38" rx="9" fill="url(#g-purple)"/><g fill="none" stroke="#fff" stroke-width="2"><path d="M16 33a13 13 0 1 1 16 0"/><path d="M19 28a7 7 0 1 1 10 0"/></g><circle cx="24" cy="23" r="3" fill="#fff"/><path fill="#fff" d="M21 28h6l-1 12h-4z"/></svg></a>
    <a href="#"><svg viewBox="0 0 48 48"><path fill="#5aa7e8" d="M40 10h4v10h-4z"/><path fill="#f2a93b" d="M40 20h4v10h-4z"/><path fill="#5fc45c" d="M40 30h4v8h-4z"/><rect x="4" y="5" width="38" height="38" rx="9" fill="#a27439"/><circle cx="24" cy="24" r="12" fill="none" stroke="#7c5624"/><circle cx="24" cy="20" r="5" fill="#7c5624"/><path fill="#7c5624" d="M15 32q9-12 18 0z"/></svg></a>
    <a href="#"><svg viewBox="0 0 48 48"><use href="#exec"/><text x="8" y="17" class="t-exec">exec</text></svg></a>
    <a href="#" class="on"><svg viewBox="0 0 48 48"><rect x="6" y="6" width="36" height="36" rx="9" fill="#0f0f10" stroke="#a8b0b2" stroke-width="2"/><path fill="none" stroke="#eee" stroke-width="2" d="M11 13l4 3-4 3M17 21h6"/></svg></a>
    <a href="#"><svg viewBox="0 0 48 48"><rect x="5" y="5" width="38" height="38" rx="9" fill="#f8f8f8"/><path fill="#f2423b" d="M5 16v-2q0-9 9-9h20q9 0 9 9v2z"/><text x="24" y="14" class="t-may" text-anchor="middle">MAY</text><text x="24" y="37" class="t-17" text-anchor="middle">17</text></svg></a>
    <a href="#" class="on"><svg viewBox="0 0 48 48"><rect x="5" y="5" width="38" height="38" rx="9" fill="#f2f2f0"/><use href="#chrome" x="8" y="8" width="32" height="32"/></svg></a>
    <a href="#"><svg><use href="#doc"/></svg></a>
    <a href="#"><svg viewBox="0 0 48 48"><use href="#exec"/><text x="8" y="17" class="t-exec">exec</text></svg></a>
    <a href="#"><svg viewBox="0 0 48 48"><rect x="5" y="5" width="38" height="38" rx="9" fill="#2c2d33"/><circle cx="24" cy="23" r="11" fill="#2ba7f0" stroke="#d5dade" stroke-width="6"/><path stroke="#a9aeb3" stroke-width="7" d="M27 27l11 12"/></svg></a>
    <a href="#"><svg viewBox="0 0 48 48"><path fill="#fc2e6f" d="M6 4l18 6-5 32L3 36z"/><path fill="#f98a1c" d="M3 20l8 20 16 5-6-20z"/><path fill="#2079f0" d="M22 8l10-5 12 10-4 30-14 2z"/><path fill="#22b5e0" d="M30 4l14 8-5 14z"/><path fill="#111" d="M11 10h26v27H11z"/><text x="13" y="25" class="t-ij">IJ</text><path stroke="#fff" stroke-width="2" d="M14 33h10"/></svg></a>
    <a href="#" class="on"><svg viewBox="0 0 48 48"><rect x="5" y="5" width="38" height="38" rx="9" fill="#9a9c9c"/><circle cx="24" cy="24" r="16" fill="#3a3b3c" stroke="#6c6e6f" stroke-width="2" stroke-dasharray="2 1"/><circle cx="24" cy="24" r="11" fill="none" stroke="#9a9c9c" stroke-width="2"/><path stroke="#9a9c9c" stroke-width="2" d="M24 24h11M24 24l-6-10M24 24l-6 10"/></svg><span class="badge">1</span></a>
    <a href="#"><svg viewBox="0 0 48 48"><path fill="#d9a45c" d="M23 5c12 0 19 8 18 17-1 6-8 6-10 9-3 4 2 11-7 11C12 42 3 34 3 23 3 12 12 5 23 5z"/><g><circle cx="20" cy="12" r="5" fill="#f07a1c"/><circle cx="10" cy="18" r="4" fill="#1e7a33"/><circle cx="11" cy="28" r="4" fill="#2848b8"/><circle cx="21" cy="35" r="5" fill="#7a1e8c"/><circle cx="31" cy="15" r="4" fill="#c02222"/></g><path stroke="#2f6be0" stroke-width="4" d="M44 4L32 32"/><path stroke="#f08a1c" stroke-width="5" d="M31 36l-4 10"/></svg></a>
    <a href="#"><svg viewBox="0 0 48 48"><rect x="5" y="5" width="38" height="38" rx="9" fill="#0b4ff5"/><text x="24" y="28" class="t-zoom" text-anchor="middle">zoom</text></svg></a>
    <a href="#"><svg viewBox="0 0 48 48"><path fill="#134c94" d="M24 1L1 47l17-16z"/><path fill="#c4112e" d="M24 1l23 46-20-10z"/><path fill="#1e8a34" d="M1 47l18-14 28 14z"/><path fill="#d6d6d6" d="M23 24l5 13-11-4z"/></svg></a>
    <a href="#"><svg viewBox="0 0 48 48"><rect x="5" y="5" width="38" height="38" rx="9" fill="#fff"/><path fill="#111" d="M24 7l16 18c1 4-5 3-9 4 6 3 1 6-3 6 2 4-6 5-6 1-5 0-5-3-2-5-6-1-12-2-12-6z"/><path fill="#ddd" d="M24 10l6 8-4 2-3-2-4 2z"/></svg></a>
    <a href="#" class="on"><svg viewBox="0 0 48 48"><circle cx="24" cy="24" r="24" fill="#58585a"/><path fill="#fff" d="M4 26c0-9 4-14 11-15 3 0 5-2 9-1 4 0 5 3 6 6 2-2 3-3 6-3 5 1 8 7 8 14 0 6-3 10-7 13l-2-1c4-4 4-8 1-12-3 2-5 1-6 2v10h-7V28h-3v11h-7l-1-10-2 10H5c1-5-1-8-1-13z"/><path fill="none" stroke="#58585a" d="M30 16c-1 5 1 9 6 10"/></svg></a>
    <a href="#"><svg viewBox="0 0 48 48"><rect x="5" y="5" width="38" height="38" rx="9" fill="#97999a"/><rect x="16" y="7" width="16" height="34" rx="3" fill="url(#g-phone)" stroke="#222" stroke-width="2"/></svg></a>
    <a href="#"><svg viewBox="0 0 48 48"><rect x="5" y="5" width="38" height="38" rx="9" fill="#1d1c22"/><circle cx="24" cy="24" r="15" fill="#9a6fe0"/><path fill="#f5eef5" d="M15 14l5 3h8l5-3 1 14q-3 8-10 8t-10-8z"/><circle cx="20" cy="24" r="2"/><circle cx="28" cy="24" r="2"/><path stroke="#e06a8c" stroke-width="2" d="M22 30h4"/></svg></a>
    <a href="#" class="on"><svg viewBox="0 0 48 48"><rect x="5" y="5" width="38" height="38" rx="9" fill="#fff"/><path fill="#e8142a" fill-rule="evenodd" d="M24 6c10 0 17 8 17 18s-7 18-17 18S7 34 7 24 14 6 24 6zm0 4c-5 0-8 6-8 14s3 14 8 14 8-6 8-14-3-14-8-14z"/></svg></a>
    <i class="sep"></i>
    <a href="#"><svg viewBox="0 0 48 48"><rect x="5" y="5" width="38" height="38" rx="9" fill="#fa7d0f"/><path fill="#fff" d="M11 15q8-4 12 0v19q-5-3-12 0zM25 15q5-4 12 0v19q-7-3-12 0z"/></svg></a>
    <a href="#"><svg><use href="#firefox"/></svg></a>
    <a href="#"><svg viewBox="0 0 48 48"><rect x="5" y="5" width="38" height="38" rx="9" fill="#df1f26"/><path fill="#fff" d="M10 15l5-2 2 20-4 1z"/><path fill="#fff" d="M17 12h19v23H17z"/><circle cx="26" cy="20" r="4" fill="#df1f26"/><path fill="#df1f26" d="M19 33q7-13 14 0z"/><circle cx="35" cy="36" r="9" fill="#2c2c2e"/><circle cx="35" cy="36" r="3" fill="#777"/></svg></a>
    <i class="sep"></i>
    <a href="#"><svg viewBox="0 0 48 48"><path fill="#fff" d="M12 4l18-1 2 14H12z"/><path fill="#333" d="M20 4h5v10h-5z"/><path fill="#2a95d6" d="M5 10h10l3 3h25v8H5z"/><rect x="4" y="15" width="40" height="28" rx="3" fill="#52c1fa"/></svg></a>
    <a href="#"><svg viewBox="0 0 48 48"><rect x="2" y="13" width="44" height="22" fill="#e8e6e4"/><path stroke="#d8a9a9" d="M5 18h16M5 22h12M5 26h14"/><circle cx="38" cy="38" r="8" fill="#d5d2f2"/><text x="38" y="43" class="t-bs" text-anchor="middle">B</text></svg></a>
    <a href="#"><svg><use href="#term-thumb"/></svg></a>
    <a href="#"><svg viewBox="0 0 48 48"><rect x="3" y="2" width="42" height="43" fill="#1b1b1b"/><path fill="#242424" d="M3 2h12v43H3z"/><path stroke="#2a3d55" d="M18 18h22"/><circle cx="38" cy="38" r="6" fill="#444" stroke="#aaa" stroke-width="2"/></svg></a>
    <a href="#"><svg><use href="#term-thumb"/></svg></a>
    <a href="#"><svg><use href="#term-thumb"/></svg></a>
    <a href="#"><svg><use href="#term-thumb"/></svg></a>
    <a href="#"><svg viewBox="0 0 48 48"><rect x="2" y="12" width="44" height="25" fill="#f4f4fa"/><path stroke="#a9a3ea" d="M8 16h22M8 20h16M8 25h12M8 30h14"/><use href="#chrome" x="31" y="31" width="15" height="15"/></svg></a>
    <a href="#"><svg viewBox="0 0 48 48"><rect x="2" y="17" width="44" height="14" fill="#9d98f6"/><path stroke="#fff" stroke-width="2" d="M2 21h44M2 27h44"/><use href="#chrome" x="31" y="31" width="15" height="15"/></svg></a>
    <a href="#"><svg viewBox="0 0 48 48"><path fill="#5e6163" d="M8 8h32l-4 34q-12 6-24 0z"/><path fill="#8b8e90" d="M14 12l3 30h3l-2-30zM28 12l-1 31h3l3-31z"/><ellipse cx="24" cy="9" rx="16" ry="4" fill="#9fa2a3"/><path fill="#e8e8e8" d="M11 9l5-6 5 3 5-4 5 4 6 3-4 4H14z"/></svg></a>
  </footer>

</body>
</html>
```

FILE: styles.css
```css
* {
  box-sizing: border-box;
}
body {
  margin: 0;
  height: 100vh;
  overflow: hidden;
  position: relative;
  display: flex;
  flex-direction: column;
  font-family: Inter, "Liberation Sans", sans-serif;
  font-size: 26px;
  color: #fff;
  background: radial-gradient(circle at 88% 100%, #4a2f18, transparent 8%), radial-gradient(circle at 10% 100%, #14200f, transparent 20%), #0d120f;
}
a {
  color: inherit;
  text-decoration: none;
}
p {
  margin: 0;
}
button {
  font: inherit;
  border: none;
  padding: 0;
  background: none;
  color: inherit;
}
.defs {
  position: absolute;
  width: 0;
  height: 0;
}

/* menu bar */
.menubar {
  flex: none;
  height: 48px;
  margin-bottom: 2px;
  padding: 0 38px 0 40px;
  display: flex;
  justify-content: space-between;
  align-items: center;
  background: linear-gradient(90deg, #3a3a30, #35362a 60%, #302f25);
  font-size: 25px;
  font-weight: 500;
}
.menus {
  display: flex;
  align-items: center;
  gap: 42px;
}
.apple {
  width: 27px;
  height: 32px;
}
.menus .app {
  font-weight: 700;
}
.status {
  display: flex;
  align-items: center;
  gap: 38px;
}
.clock {
  font-size: 26px;
  font-weight: 400;
  white-space: pre;
}

/* back browser */
.browser {
  flex: 1;
  display: flex;
  flex-direction: column;
  border-radius: 20px;
  overflow: hidden;
  background: #fff;
}
.tabstrip {
  height: 80px;
  flex: none;
  display: flex;
  align-items: center;
  padding: 0 12px 2px 42px;
  background: #202020;
  border-top: 2px solid #565656;
}
.lights {
  display: flex;
  gap: 16px;
}
.lights i {
  width: 24px;
  height: 24px;
  border-radius: 50%;
}
.red { background: #fe4a49; }
.amber { background: #fdb02a; }
.green { background: #28c231; }
.off { background: #393939; }
.idle { background: #3c3c3a; }
.tabs {
  display: flex;
}
.tab {
  width: 42px;
  height: 32px;
  display: flex;
  border-right: 3px solid #2e2e2e;
}
.tab.last {
  border-color: transparent;
}
.tab svg {
  width: 32px;
  height: 32px;
  flex: none;
}
.pinned {
  margin: 0 44px 0 39px;
}
.pinned .tab {
  width: 44px;
}
.tab-active {
  position: relative;
  align-self: flex-end;
  width: 64px;
  height: 68px;
  margin-bottom: -2px;
  padding-bottom: 12px;
  border-radius: 20px 20px 0 0;
  background: #2f2f2f;
}
.tab-active::before,
.tab-active::after {
  content: "";
  position: absolute;
  bottom: 0;
  width: 22px;
  height: 22px;
}
.tab-active::before {
  right: 100%;
  background: radial-gradient(circle at 0 0, transparent 21px, #2f2f2f 22px);
}
.tab-active::after {
  left: 100%;
  background: radial-gradient(circle at 100% 0, transparent 21px, #2f2f2f 22px);
}
.tab-new {
  margin-left: 28px;
  height: 24px;
}
.tab-new svg {
  display: block;
}
.tab-search {
  margin-left: auto;
  width: 56px;
  height: 56px;
  border-radius: 20px;
  background: #2f2f2f;
}
.toolbar {
  height: 94px;
  flex: none;
  display: flex;
  align-items: center;
  padding: 0 12px 0 30px;
  background: #2f2f2f;
  border-bottom: 2px solid #3c3c3c;
}
.tool {
  width: 28px;
  height: 28px;
  margin-right: 44px;
}
.tool svg {
  display: block;
  fill: none;
  stroke: #707070;
  stroke-width: 3;
}
.omnibox {
  flex: 1;
  height: 68px;
  margin-left: -6px;
  padding-left: 10px;
  border-radius: 34px;
  background: #1f1f1f;
  display: flex;
  align-items: center;
  gap: 16px;
  font-size: 28px;
  color: #e3e3e3;
}
.chip {
  width: 48px;
  height: 48px;
  border-radius: 50%;
  background: #303030;
  display: grid;
  place-items: center;
  color: #e3e3e3;
}
.chip svg {
  width: 30px;
  height: 30px;
}
.profile {
  width: 48px;
  height: 48px;
  margin: 0 24px 0 20px;
  border-radius: 50%;
  background: #8a6642;
}
.update {
  height: 68px;
  padding: 0 28px 0 24px;
  border-radius: 34px;
  background: #07365f;
  color: #909ba6;
  font-size: 26px;
  display: flex;
  align-items: center;
  gap: 20px;
}
.page {
  padding: 12px;
  font-family: "Liberation Serif", serif;
}
.invite {
  display: block;
  font-size: 24px;
  line-height: 28px;
  color: #0000ee;
  text-decoration: underline;
}

/* notes, in both browser windows */
.note {
  min-height: 192px;
  margin-bottom: 74px;
  padding: 0 40px 8px 138px;
  display: flex;
  flex-direction: column;
  justify-content: flex-end;
  gap: 38px;
  border-radius: 72px 72px 72px 0;
  background: #c5ffc3;
  color: #000080;
  font-family: "DejaVu Sans Condensed", "DejaVu Sans", sans-serif;
  font-size: 38px;
  line-height: 48px;
  text-shadow: 1px 1px 0 #0000ff, -1px -1px 0 #0000c0;
}
.note.welcome {
  background: #a39fff;
  margin-bottom: 0;
}
.note.small {
  max-width: 80%;
  min-height: 144px;
  margin-bottom: 56px;
  padding: 0 0 4px 103px;
  gap: 29px;
  border-radius: 52px 52px 52px 0;
  font-size: 28px;
  line-height: 36px;
}
.note.small + .invite {
  margin-top: -56px;
}

/* Messages */
.messages {
  position: absolute;
  top: 136px;
  bottom: 128px;
  left: 434px;
  right: 397px;
  display: flex;
  border: 1px solid #000;
  border-radius: 20px;
  overflow: hidden;
  background: #171717;
  box-shadow: 0 36px 90px rgba(0, 0, 0, 0.6);
}
.sidebar {
  width: 641px;
  flex: none;
  display: flex;
  flex-direction: column;
  padding: 0 20px;
  background: #21211f;
  border-right: 2px solid #000;
  border-top: 2px solid #555;
}
.side-top {
  height: 103px;
  display: flex;
  justify-content: space-between;
  align-items: center;
  padding: 0 16px 6px 19px;
}
.search {
  height: 56px;
  padding: 0 14px;
  display: flex;
  align-items: center;
  gap: 15px;
  border: 1px solid #393937;
  border-bottom: 2px solid #4a4a48;
  border-radius: 12px;
  background: #292927;
  color: #a0a09e;
}
.search svg {
  width: 26px;
  height: 26px;
}
.search input {
  flex: 1;
  border: none;
  padding: 0;
  background: none;
  font: inherit;
  color: inherit;
}
.search input::placeholder {
  color: #a0a09e;
}
.chat {
  display: flex;
  gap: 12px;
  padding: 13px 20px 0 36px;
}
.chat.selected {
  height: 132px;
  margin: 22px 0 0 -1px;
  border-radius: 12px;
  background: #323230;
}
.sidebar hr {
  width: 470px;
  height: 2px;
  margin: auto 0 0 128px;
  border: none;
  background: #3a3a38;
}
.chat.cut {
  height: 40px;
  margin-left: -1px;
}
.avatar {
  width: 80px;
  height: 80px;
  flex: none;
  margin-top: 11px;
  border-radius: 50%;
  background: linear-gradient(#616161, #343434);
  display: grid;
  place-items: center;
  font-size: 34px;
  font-weight: 600;
}
.chat-text {
  flex: 1;
  font-size: 24px;
  line-height: 30px;
  color: #a2a2a0;
}
.chat-head {
  display: flex;
  justify-content: space-between;
  margin-bottom: 4px;
}
.chat-head b {
  font-size: 26px;
  font-weight: 600;
  color: #e2e2e0;
}
.cut .chat-head b {
  color: #a0a0a0;
}
.cut span {
  color: #777;
}
.talk {
  flex: 1;
  display: flex;
  flex-direction: column;
}
.talk-top {
  height: 104px;
  flex: none;
  padding: 0 38px 2px 40px;
  display: flex;
  justify-content: space-between;
  align-items: center;
  background: linear-gradient(90deg, #2e2e2e 15%, #2b2b29 25%);
  border-top: 2px solid #666;
  border-bottom: 2px solid #000;
  color: #e2e2e0;
}
.talk-top span {
  color: #9b9b99;
}
.talk-tools {
  display: flex;
  align-items: center;
  gap: 40px;
}
.talk-body {
  flex: 1;
  display: flex;
  flex-direction: column;
  align-items: flex-start;
  padding: 0 32px;
}
.preview {
  position: relative;
  width: 320px;
  background: #2d2d2d;
  border-radius: 0 0 28px 28px;
}
.preview-image {
  height: 43px;
  background: #322d2a;
}
.preview-foot {
  height: 58px;
  padding: 0 26px 0 20px;
  display: flex;
  justify-content: space-between;
  align-items: center;
  font-size: 20px;
  color: #a6a6a6;
}
.tail-left::before,
.link-card::after {
  content: "";
  position: absolute;
  bottom: 0;
  width: 28px;
  height: 28px;
}
.tail-left::before {
  left: -8px;
  background: #2d2d2d;
  clip-path: path("M8 0V12C8 20 5 25 0 28C8 28 14 26 18 22L28 20V0z");
}
.link-card::after {
  right: -8px;
  background: #777;
  clip-path: path("M20 0V12C20 20 23 25 28 28C20 28 14 26 10 22L0 20V0z");
}
.bubble {
  height: 54px;
  padding: 0 14px;
  border-radius: 27px;
  font-size: 26px;
  line-height: 54px;
}
.mine {
  align-self: flex-end;
  margin: 20px 0 6px;
  background: #2b7fff;
}
.theirs {
  margin: 20px 0 6px;
  background: #2d2d2d;
  color: #e0e0e0;
}
.link-card {
  position: relative;
  align-self: flex-end;
  width: 638px;
  height: 88px;
  padding: 0 26px 0 20px;
  display: flex;
  justify-content: space-between;
  align-items: center;
  border-radius: 28px;
  background: #777;
}
.link-card b,
.link-card span {
  display: block;
  line-height: 30px;
}
.link-card b {
  font-size: 22px;
  font-weight: 700;
  color: #f0f0f0;
}
.link-card span {
  font-size: 20px;
  color: #c8c8c8;
}
.link-card svg {
  width: 56px;
  height: 56px;
}
.preview.open {
  flex: 1;
  background: #322d2a;
  border-radius: 28px 28px 0 0;
  text-align: center;
  padding-top: 68px;
  font-size: 20px;
  color: #1a73f5;
}
.compose {
  height: 56px;
  flex: none;
  display: flex;
  gap: 40px;
  padding: 0 32px;
}
.compose i {
  width: 40px;
  height: 40px;
  margin-top: -18px;
  border-radius: 50%;
  background: #3a3a3a;
}
.compose span {
  flex: 1;
  height: 56px;
  margin-top: -34px;
  border: 2px solid #3a3a3a;
  border-radius: 28px;
}

/* popup */
.popup {
  position: absolute;
  top: 699px;
  bottom: 175px;
  left: 40px;
  right: 39px;
  border: 1px solid #000;
  border-radius: 20px;
  background: #fff;
  box-shadow: 0 40px 100px rgba(0, 0, 0, 0.8);
}
.popup-title {
  height: 56px;
  padding: 0 0 2px 15px;
  display: flex;
  align-items: center;
  border-top: 2px solid #6a6a6a;
  border-radius: 20px 20px 0 0;
  background: #2b2b2b;
}
.popup-title h1 {
  flex: 1;
  margin: 0 119px 0 0;
  text-align: center;
  font-size: 26px;
  font-weight: 700;
  color: #a8a8a8;
}
.popup-url {
  height: 70px;
  padding: 0 0 2px 9px;
  display: flex;
  align-items: center;
  gap: 16px;
  border-top: 2px solid #000;
  border-bottom: 2px solid #3c3c3c;
  background: #1f1f1f;
  font-size: 28px;
  color: #e3e3e3;
}
.popup-url em {
  font-style: normal;
  color: #b8b8b8;
}
.board {
  padding: 16px 24px 0 15px;
  font-family: "Liberation Serif", serif;
  color: #000;
}
.board summary {
  display: block;
  font-size: 32px;
  line-height: 37px;
}
.board summary::before {
  content: "";
  display: inline-block;
  width: 20px;
  height: 18px;
  margin: 0 9px 2px 1px;
  background: #000;
  clip-path: polygon(0 0, 100% 0, 50% 100%);
}
.cursor {
  position: absolute;
  top: 142px;
  right: 414px;
  filter: drop-shadow(0 2px 2px rgba(0, 0, 0, 0.4));
}

/* dock */
.dock {
  flex: none;
  height: 70px;
  margin: 6px 35px 10px;
  display: flex;
  justify-content: center;
  border: 2px solid #3a3d3a;
  border-radius: 20px;
  background: #141814;
}
.dock a {
  position: relative;
  width: 52px;
  padding: 6px 2px;
}
.dock svg {
  display: block;
  width: 48px;
  height: 48px;
}
.dock .on::after {
  content: "";
  position: absolute;
  bottom: 2px;
  left: 23px;
  width: 6px;
  height: 6px;
  border-radius: 50%;
  background: #8f928f;
}
.sep {
  width: 2px;
  margin: 9px 10px;
  background: #4a4d4a;
}
.badge {
  position: absolute;
  top: 5px;
  right: -1px;
  width: 18px;
  height: 18px;
  border-radius: 9px;
  background: #ec2c2c;
  font-size: 13px;
  line-height: 18px;
  text-align: center;
}
.badge.wide {
  width: 22px;
  font-size: 10px;
}

/* lettering inside icons */
.t-sm { font-size: 11px; font-weight: 700; fill: #12a05f; }
.t-afl { font-size: 12px; font-weight: 800; font-style: italic; fill: #fff; }
.t-afl.small { font-size: 8px; }
.t-s { font: 700 29px "Liberation Serif", serif; fill: #fff; }
.t-s.small { font-size: 15px; }
.t-sap { font-size: 13px; font-weight: 800; fill: #fff; }
.t-k { font-size: 20px; font-weight: 900; font-style: italic; fill: #000; }
.t-exec { font: 700 9px "Liberation Mono", monospace; fill: #2fb344; }
.t-fz { font-size: 36px; font-weight: 800; font-style: italic; fill: #fff; }
.t-tv { font-size: 16px; fill: #fff; }
.t-b { font: 700 33px "Liberation Serif", serif; fill: #0c0c3c; }
.t-bs { font: 700 14px "Liberation Serif", serif; fill: #0c0c3c; }
.t-may { font-size: 9px; font-weight: 600; fill: #fff; }
.t-17 { font-size: 22px; fill: #222; }
.t-ij { font: 700 16px "Liberation Mono", monospace; fill: #fff; }
.t-zoom { font-size: 12px; font-weight: 600; fill: #fff; }
```
